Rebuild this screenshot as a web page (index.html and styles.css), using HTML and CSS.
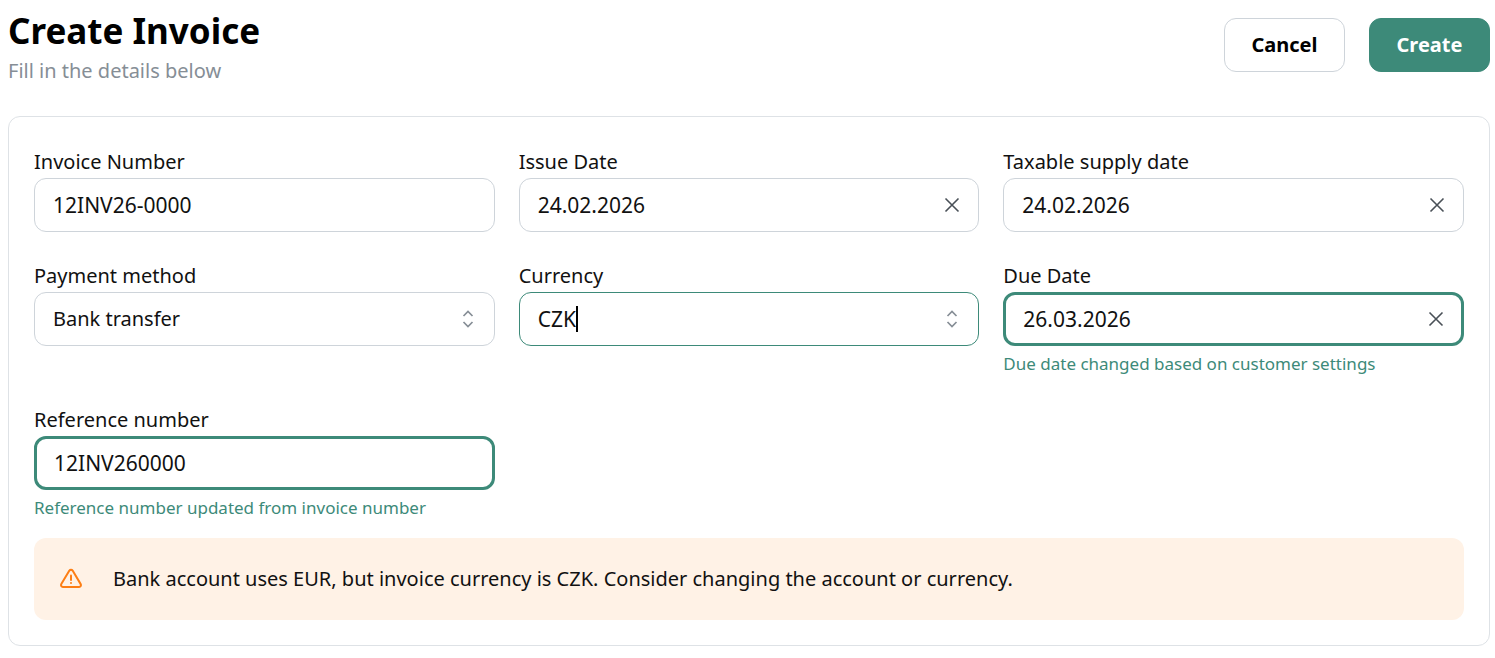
FILE: index.html
```html
<!DOCTYPE html>
<html lang="en">
<head>
    <meta charset="UTF-8">
    <meta name="viewport" content="width=device-width, initial-scale=1.0">
    <title>Create Invoice</title>
    <link rel="stylesheet" href="styles.css">
</head>
<body>
    <form id="invoiceForm">
        <header class="page-header">
            <div>
                <h1>Create Invoice</h1>
                <p class="subtitle">Fill in the details below</p>
            </div>
            <div class="actions">
                <button type="button" class="btn">Cancel</button>
                <button type="submit" class="btn btn-primary">Create</button>
            </div>
        </header>

        <main class="card">
            <div class="fields">
                <div class="field">
                    <label for="invoiceNumber">Invoice Number</label>
                    <div class="control">
                        <input type="text" id="invoiceNumber" name="invoiceNumber" value="12INV26-0000">
                    </div>
                </div>

                <div class="field">
                    <label for="issueDate">Issue Date</label>
                    <div class="control">
                        <input type="text" id="issueDate" name="issueDate" value="24.02.2026">
                        <button type="button" class="clear" aria-label="Clear issue date">
                            <svg viewBox="0 0 16 16"><path d="M1.5 1.5l13 13M14.5 1.5l-13 13"/></svg>
                        </button>
                    </div>
                </div>

                <div class="field">
                    <label for="taxableDate">Taxable supply date</label>
                    <div class="control">
                        <input type="text" id="taxableDate" name="taxableDate" value="24.02.2026">
                        <button type="button" class="clear" aria-label="Clear taxable supply date">
                            <svg viewBox="0 0 16 16"><path d="M1.5 1.5l13 13M14.5 1.5l-13 13"/></svg>
                        </button>
                    </div>
                </div>

                <div class="field">
                    <label for="paymentMethod">Payment method</label>
                    <div class="control">
                        <select id="paymentMethod" name="paymentMethod">
                            <option selected>Bank transfer</option>
                            <option>Cash</option>
                            <option>Card</option>
                        </select>
                        <svg class="chevrons" viewBox="0 0 12 18"><path d="M1.5 6L6 1.5 10.5 6M1.5 12L6 16.5 10.5 12"/></svg>
                    </div>
                </div>

                <div class="field">
                    <label for="currency">Currency</label>
                    <div class="control active">
                        <input type="text" role="combobox" aria-expanded="false" class="search" id="currency" name="currency" value="CZK">
                        <span class="caret"></span>
                        <svg class="chevrons" viewBox="0 0 12 18"><path d="M1.5 6L6 1.5 10.5 6M1.5 12L6 16.5 10.5 12"/></svg>
                    </div>
                </div>

                <div class="field">
                    <label for="dueDate">Due Date</label>
                    <div class="control changed">
                        <input type="text" id="dueDate" name="dueDate" value="26.03.2026" aria-describedby="dueDateHint">
                        <button type="button" class="clear" aria-label="Clear due date">
                            <svg viewBox="0 0 16 16"><path d="M1.5 1.5l13 13M14.5 1.5l-13 13"/></svg>
                        </button>
                    </div>
                    <div class="hint" id="dueDateHint">Due date changed based on customer settings</div>
                </div>

                <div class="field">
                    <label for="referenceNumber">Reference number</label>
                    <div class="control changed">
                        <input type="text" id="referenceNumber" name="referenceNumber" value="12INV260000" aria-describedby="referenceHint">
                    </div>
                    <div class="hint" id="referenceHint">Reference number updated from invoice number</div>
                </div>
            </div>

            <div class="alert" role="alert">
                <svg class="alert-icon" viewBox="0 0 24 24">
                    <path d="M12 8.5v4.500"/>
                    <path d="M10.4 3.6L2.3 17.1a1.9 1.9 0 0 0 1.6 2.9h16.2a1.9 1.9 0 0 0 1.6-2.9L13.6 3.6a1.9 1.9 0 0 0-3.2 0z"/>
                    <path d="M12 16h.01"/>
                </svg>
                <span>Bank account uses EUR, but invoice currency is CZK. Consider changing the account or currency.</span>
            </div>
        </main>
    </form>
</body>
</html>
```
FILE: styles.css
```css
* {
    box-sizing: border-box;
}
body {
    margin: 0;
    padding: 8px 5px 12px 8px;
    background-color: #fff;
    color: #111;
    font-family: "Noto Sans", sans-serif;
    font-size: 20px;
    line-height: 32px;
}
h1, p {
    margin: 0;
}
h1 {
    color: #000;
    font-size: 35px;
    line-height: 46px;
    font-weight: 700;
}
.subtitle {
    color: #868e96;
    line-height: 34px;
}
.page-header {
    display: flex;
    justify-content: space-between;
    align-items: flex-start;
    margin-bottom: 28px;
}
.actions {
    display: flex;
    gap: 24px;
    padding-top: 10px;
}
.btn {
    height: 54px;
    min-width: 121px;
    padding: 0 24px;
    border: 1px solid #ced4da;
    border-radius: 12px;
    background-color: #fff;
    color: #000;
    font: inherit;
    font-weight: 700;
    cursor: pointer;
}
.btn-primary {
    border-color: #3d8a79;
    background-color: #3d8a79;
    color: #fff;
}
.card {
    padding: 29px 25px 25px;
    border: 1px solid #dee2e6;
    border-radius: 12px;
}
.fields {
    display: grid;
    grid-template-columns: repeat(3, 1fr);
    gap: 28px 24px;
}
label {
    display: block;
    line-height: 31px;
    padding-bottom: 1px;
}
.control {
    display: flex;
    align-items: center;
    height: 54px;
    padding: 0 18px;
    border: 1px solid #ced4da;
    border-radius: 12px;
}
.control.active {
    border-color: #3d8a79;
}
.control.changed {
    padding: 0 17px;
    border: 3px solid #3d8a79;
}
.control input,
.control select {
    flex: 1;
    min-width: 0;
    height: 100%;
    padding: 0;
    border: 0;
    outline: 0;
    background: none;
    color: #111;
    font: inherit;
    appearance: none;
}
.control input {
    font-size: 21px;
}
.control .search {
    flex: none;
    field-sizing: content;
}
.caret {
    width: 2px;
    height: 26px;
    margin-right: auto;
    background-color: #000;
}
.clear {
    display: flex;
    padding: 0;
    border: 0;
    background: none;
    cursor: pointer;
}
.clear svg {
    width: 16px;
    height: 16px;
    fill: none;
    stroke: #495057;
    stroke-width: 1.6;
}
.chevrons {
    width: 12px;
    height: 18px;
    margin-right: 2px;
    fill: none;
    stroke: #868e96;
    stroke-width: 1.7;
}
.hint {
    padding-top: 5px;
    color: #3d8a79;
    font-size: 17px;
    line-height: 25px;
}
.alert {
    display: flex;
    align-items: center;
    gap: 30px;
    margin-top: 18px;
    padding: 25px;
    border-radius: 12px;
    background-color: #fff2e6;
}
.alert-icon {
    width: 24px;
    height: 24px;
    fill: none;
    stroke: #fd7e14;
    stroke-width: 2;
    stroke-linecap: round;
    stroke-linejoin: round;
}
```
